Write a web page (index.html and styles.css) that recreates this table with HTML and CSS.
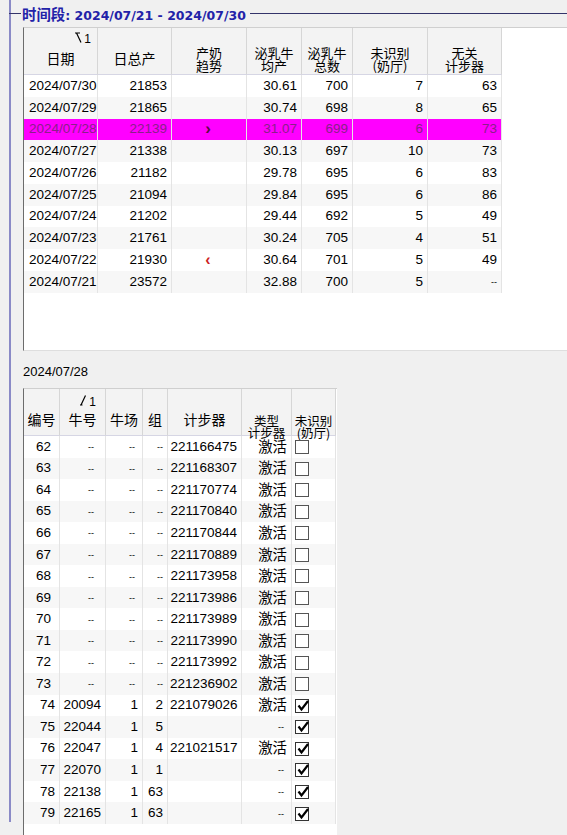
FILE: index.html
```html
<!DOCTYPE html>
<html lang="zh-CN">
<head>
<meta charset="utf-8">
<title>时间段</title>
<link rel="stylesheet" href="styles.css">
</head>
<body>
<div class="group">
  <div class="group-head">
    <span class="dash"></span>
    <span class="group-title"><span class="title-zh">时间段</span>: 2024/07/21 - 2024/07/30</span>
    <span class="rule"></span>
  </div>
  <div class="group-body">
    <div class="grid grid-top">
      <table>
        <thead>
          <tr>
            <th class="w-date"><div class="hd"><span class="sort"><svg width="7" height="11" viewBox="0 0 7 11"><path d="M0 1H5M1.5 1L6 10.5" fill="none" stroke="#000" stroke-width="1.2"/></svg><span class="sort-n">1</span></span><span class="lbl">日期</span></div></th>
            <th class="w-total"><div class="hd"><span class="lbl">日总产</span></div></th>
            <th class="w-trend"><div class="hd"><span class="lbl two">产奶<br>趋势</span></div></th>
            <th class="w-avg"><div class="hd"><span class="lbl two">泌乳牛<br>均产</span></div></th>
            <th class="w-cnt"><div class="hd"><span class="lbl two">泌乳牛<br>总数</span></div></th>
            <th class="w-unk"><div class="hd"><span class="lbl two">未识别<br>(奶厅)</span></div></th>
            <th class="w-ped"><div class="hd"><span class="lbl two">无关<br>计步器</span></div></th>
          </tr>
        </thead>
        <tbody>
          <tr><td class="l">2024/07/30</td><td>21853</td><td class="c"></td><td>30.61</td><td>700</td><td>7</td><td>63</td></tr>
          <tr><td class="l">2024/07/29</td><td>21865</td><td class="c"></td><td>30.74</td><td>698</td><td>8</td><td>65</td></tr>
          <tr class="sel"><td class="l">2024/07/28</td><td>22139</td><td class="c"><span class="up">›</span></td><td>31.07</td><td>699</td><td>6</td><td>73</td></tr>
          <tr><td class="l">2024/07/27</td><td>21338</td><td class="c"></td><td>30.13</td><td>697</td><td>10</td><td>73</td></tr>
          <tr><td class="l">2024/07/26</td><td>21182</td><td class="c"></td><td>29.78</td><td>695</td><td>6</td><td>83</td></tr>
          <tr><td class="l">2024/07/25</td><td>21094</td><td class="c"></td><td>29.84</td><td>695</td><td>6</td><td>86</td></tr>
          <tr><td class="l">2024/07/24</td><td>21202</td><td class="c"></td><td>29.44</td><td>692</td><td>5</td><td>49</td></tr>
          <tr><td class="l">2024/07/23</td><td>21761</td><td class="c"></td><td>30.24</td><td>705</td><td>4</td><td>51</td></tr>
          <tr><td class="l">2024/07/22</td><td>21930</td><td class="c"><span class="down">‹</span></td><td>30.64</td><td>701</td><td>5</td><td>49</td></tr>
          <tr><td class="l">2024/07/21</td><td>23572</td><td class="c"></td><td>32.88</td><td>700</td><td>5</td><td><span class="dsh">--</span></td></tr>
        </tbody>
      </table>
    </div>

    <div class="day-label">2024/07/28</div>

    <div class="grid grid-bottom">
      <table>
        <thead>
          <tr>
            <th class="w-no"><div class="hd"><span class="lbl">编号</span></div></th>
            <th class="w-cow"><div class="hd"><span class="sort"><svg width="7" height="11" viewBox="0 0 7 11"><path d="M0 10H2.5M1 10L5.5 0.5" fill="none" stroke="#000" stroke-width="1.2"/></svg><span class="sort-n">1</span></span><span class="lbl">牛号</span></div></th>
            <th class="w-farm"><div class="hd"><span class="lbl">牛场</span></div></th>
            <th class="w-grp"><div class="hd"><span class="lbl">组</span></div></th>
            <th class="w-pedo"><div class="hd"><span class="lbl">计步器</span></div></th>
            <th class="w-type"><div class="hd"><span class="lbl low">类型<br>计步器</span></div></th>
            <th class="w-chk"><div class="hd"><span class="lbl low">未识别<br>(奶厅)</span></div></th>
          </tr>
        </thead>
        <tbody>
          <tr><td class="pin">62</td><td><span class="dsh">--</span></td><td><span class="dsh">--</span></td><td><span class="dsh">--</span></td><td>221166475</td><td><span class="zh">激活</span></td><td class="l"><span class="cb"></span></td></tr>
          <tr><td class="pin">63</td><td><span class="dsh">--</span></td><td><span class="dsh">--</span></td><td><span class="dsh">--</span></td><td>221168307</td><td><span class="zh">激活</span></td><td class="l"><span class="cb"></span></td></tr>
          <tr><td class="pin">64</td><td><span class="dsh">--</span></td><td><span class="dsh">--</span></td><td><span class="dsh">--</span></td><td>221170774</td><td><span class="zh">激活</span></td><td class="l"><span class="cb"></span></td></tr>
          <tr><td class="pin">65</td><td><span class="dsh">--</span></td><td><span class="dsh">--</span></td><td><span class="dsh">--</span></td><td>221170840</td><td><span class="zh">激活</span></td><td class="l"><span class="cb"></span></td></tr>
          <tr><td class="pin">66</td><td><span class="dsh">--</span></td><td><span class="dsh">--</span></td><td><span class="dsh">--</span></td><td>221170844</td><td><span class="zh">激活</span></td><td class="l"><span class="cb"></span></td></tr>
          <tr><td class="pin">67</td><td><span class="dsh">--</span></td><td><span class="dsh">--</span></td><td><span class="dsh">--</span></td><td>221170889</td><td><span class="zh">激活</span></td><td class="l"><span class="cb"></span></td></tr>
          <tr><td class="pin">68</td><td><span class="dsh">--</span></td><td><span class="dsh">--</span></td><td><span class="dsh">--</span></td><td>221173958</td><td><span class="zh">激活</span></td><td class="l"><span class="cb"></span></td></tr>
          <tr><td class="pin">69</td><td><span class="dsh">--</span></td><td><span class="dsh">--</span></td><td><span class="dsh">--</span></td><td>221173986</td><td><span class="zh">激活</span></td><td class="l"><span class="cb"></span></td></tr>
          <tr><td class="pin">70</td><td><span class="dsh">--</span></td><td><span class="dsh">--</span></td><td><span class="dsh">--</span></td><td>221173989</td><td><span class="zh">激活</span></td><td class="l"><span class="cb"></span></td></tr>
          <tr><td class="pin">71</td><td><span class="dsh">--</span></td><td><span class="dsh">--</span></td><td><span class="dsh">--</span></td><td>221173990</td><td><span class="zh">激活</span></td><td class="l"><span class="cb"></span></td></tr>
          <tr><td class="pin">72</td><td><span class="dsh">--</span></td><td><span class="dsh">--</span></td><td><span class="dsh">--</span></td><td>221173992</td><td><span class="zh">激活</span></td><td class="l"><span class="cb"></span></td></tr>
          <tr><td class="pin">73</td><td><span class="dsh">--</span></td><td><span class="dsh">--</span></td><td><span class="dsh">--</span></td><td>221236902</td><td><span class="zh">激活</span></td><td class="l"><span class="cb"></span></td></tr>
          <tr><td>74</td><td>20094</td><td>1</td><td>2</td><td>221079026</td><td><span class="zh">激活</span></td><td class="l"><span class="cb on"><svg width="12" height="12" viewBox="0 0 12 12"><path d="M1.5 5.5L4.5 9.5L11 1" fill="none" stroke="#000" stroke-width="2.2"/></svg></span></td></tr>
          <tr><td>75</td><td>22044</td><td>1</td><td>5</td><td></td><td><span class="dsh">--</span></td><td class="l"><span class="cb on"><svg width="12" height="12" viewBox="0 0 12 12"><path d="M1.5 5.5L4.5 9.5L11 1" fill="none" stroke="#000" stroke-width="2.2"/></svg></span></td></tr>
          <tr><td>76</td><td>22047</td><td>1</td><td>4</td><td>221021517</td><td><span class="zh">激活</span></td><td class="l"><span class="cb on"><svg width="12" height="12" viewBox="0 0 12 12"><path d="M1.5 5.5L4.5 9.5L11 1" fill="none" stroke="#000" stroke-width="2.2"/></svg></span></td></tr>
          <tr><td>77</td><td>22070</td><td>1</td><td>1</td><td></td><td><span class="dsh">--</span></td><td class="l"><span class="cb on"><svg width="12" height="12" viewBox="0 0 12 12"><path d="M1.5 5.5L4.5 9.5L11 1" fill="none" stroke="#000" stroke-width="2.2"/></svg></span></td></tr>
          <tr><td>78</td><td>22138</td><td>1</td><td>63</td><td></td><td><span class="dsh">--</span></td><td class="l"><span class="cb on"><svg width="12" height="12" viewBox="0 0 12 12"><path d="M1.5 5.5L4.5 9.5L11 1" fill="none" stroke="#000" stroke-width="2.2"/></svg></span></td></tr>
          <tr><td>79</td><td>22165</td><td>1</td><td>63</td><td></td><td><span class="dsh">--</span></td><td class="l"><span class="cb on"><svg width="12" height="12" viewBox="0 0 12 12"><path d="M1.5 5.5L4.5 9.5L11 1" fill="none" stroke="#000" stroke-width="2.2"/></svg></span></td></tr>
        </tbody>
      </table>
    </div>
  </div>
</div>
</body>
</html>
```
FILE: styles.css
```css
* { box-sizing: border-box; }
html, body { margin: 0; padding: 0; }
body {
  width: 567px;
  height: 835px;
  overflow: hidden;
  background: #f0f0f0;
  color: #000;
  font-family: "Liberation Sans", "Noto Sans CJK SC", sans-serif;
  font-size: 13.5px;
}

/* group box */
.group {
  margin: 13px 0 0 9px;
  border-left: 2px solid #8a8ac6;
  height: 822px;
}
.group-head {
  margin: -13px 0 0 -2px;
  height: 26px;
  display: flex;
  align-items: center;
}
.group-head .dash { width: 12px; height: 1px; background: #34346a; }
.group-head .rule { flex: 1; height: 1px; background: #34346a; }
.group-title {
  margin: 0 4px 0 1px;
  color: #2222a8;
  font: bold 12.5px "DejaVu Sans", "Noto Sans CJK SC", sans-serif;
  white-space: nowrap;
}
.title-zh { font: bold 14.4px "Noto Sans CJK SC", sans-serif; }

.group-body { padding: 1px 0 0 12px; }

.day-label {
  height: 37px;
  padding-top: 12px;
  line-height: 18px;
  font-size: 13px;
}

/* grids */
.grid {
  background: #fff;
  border-left: 1px solid #6c6c6c;
  border-top: 1px solid #cfcfcf;
  overflow: hidden;
}
.grid-top { height: 324px; border-bottom: 1px solid #dedede; }
.grid-bottom { width: 314px; height: 460px; }

table {
  border-collapse: separate;
  border-spacing: 0;
  table-layout: fixed;
}
.grid-top table { width: 478px; }
.grid-bottom table { width: 312px; }

th {
  height: 47px;
  padding: 0;
  vertical-align: top;
  background: #f3f3f3;
  border-right: 1px solid #d6d6d6;
  border-bottom: 1px solid #d6d6e4;
  font: normal 14px "Noto Sans CJK SC", sans-serif;
}
.hd {
  height: 46px;
  display: grid;
  grid-template-rows: 15px 1fr;
}
.sort {
  grid-row: 1;
  justify-self: end;
  margin: 4px 6px 0 0;
  display: flex;
  align-items: flex-start;
  gap: 2px;
  line-height: 11px;
}
.grid-bottom .sort { margin: 6px 9px 0 0; }
.sort-n { font: 12px "Liberation Sans", sans-serif; }
.lbl {
  grid-row: 2;
  align-self: center;
  text-align: center;
  line-height: 13px;
  white-space: nowrap;
}
.lbl.two { font-size: 13px; line-height: 13px; }
.lbl.low { align-self: end; font-size: 12.5px; line-height: 11.5px; margin-bottom: -3px; }

.w-date { width: 74px; }
.w-total { width: 74px; }
.w-trend { width: 75px; }
.w-avg { width: 55px; }
.w-cnt { width: 51px; }
.w-unk { width: 75px; }
.w-ped { width: 74px; }

.w-no { width: 36px; }
.w-cow { width: 46px; }
.w-farm { width: 37px; }
.w-grp { width: 25px; }
.w-pedo { width: 74px; }
.w-type { width: 50px; }
.w-chk { width: 44px; }

td {
  height: 21.75px;
  padding: 0 4px 0 2px;
  border-right: 1px solid #e4e4e4;
  text-align: right;
  white-space: nowrap;
  overflow: hidden;
  vertical-align: middle;
  line-height: 16px;
}
.grid-bottom td { height: 21.55px; }
td.l { text-align: left; padding-left: 5px; }
td.c { text-align: center; }
tbody tr:nth-child(even) td { background: #f7f7f7; }
tr.sel td { background: #ff00ff; color: #8a1f8a; }

.up { font: bold 17px "Liberation Sans", sans-serif; color: #5a0a40; }
.down { font: bold 16px "Liberation Sans", sans-serif; color: #cc2222; }

.dsh { font-size: 9px; }
.grid-bottom td:nth-child(2) .dsh { margin-right: 7px; }
.grid-bottom td:nth-child(3) .dsh { margin-right: 3px; }
.grid-bottom td:nth-child(6) .dsh { margin-right: 3px; }

td.pin { padding-right: 8px; }

.zh { font: 14.4px/16px "Noto Sans CJK SC", sans-serif; }

td.l .cb { margin-left: -2px; }
.cb {
  display: inline-block;
  width: 14px;
  height: 14px;
  border: 1px solid #555;
  background: #fff;
  vertical-align: middle;
}
.cb.on { border-color: #333; }
.cb svg { display: block; margin: 0 0 0 1px; }
```
